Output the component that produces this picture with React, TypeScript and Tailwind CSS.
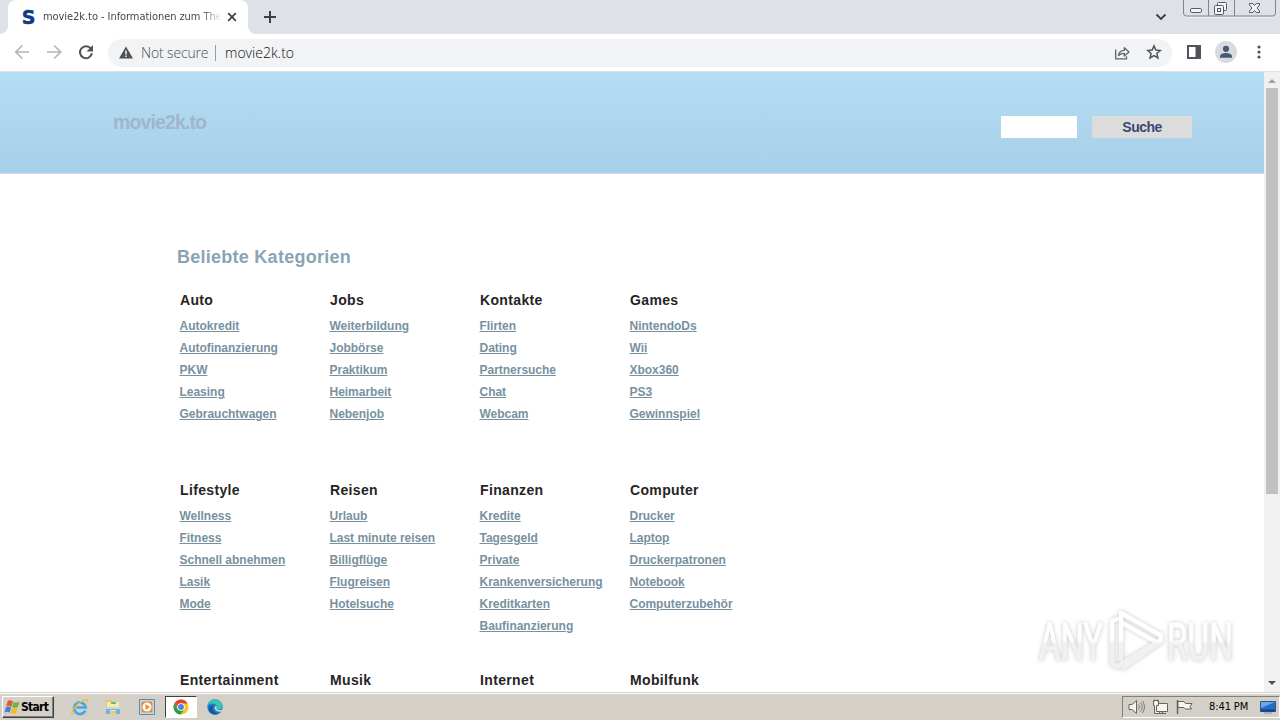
import React from "react";

type Category = { title: string; links: string[] };

const rows: Category[][] = [
  [
    { title: "Auto", links: ["Autokredit", "Autofinanzierung", "PKW", "Leasing", "Gebrauchtwagen"] },
    { title: "Jobs", links: ["Weiterbildung", "Jobbörse", "Praktikum", "Heimarbeit", "Nebenjob"] },
    { title: "Kontakte", links: ["Flirten", "Dating", "Partnersuche", "Chat", "Webcam"] },
    { title: "Games", links: ["NintendoDs", "Wii", "Xbox360", "PS3", "Gewinnspiel"] },
  ],
  [
    { title: "Lifestyle", links: ["Wellness", "Fitness", "Schnell abnehmen", "Lasik", "Mode"] },
    { title: "Reisen", links: ["Urlaub", "Last minute reisen", "Billigflüge", "Flugreisen", "Hotelsuche"] },
    { title: "Finanzen", links: ["Kredite", "Tagesgeld", "Private", "Krankenversicherung", "Kreditkarten", "Baufinanzierung"] },
    { title: "Computer", links: ["Drucker", "Laptop", "Druckerpatronen", "Notebook", "Computerzubehör"] },
  ],
  [
    { title: "Entertainment", links: [] },
    { title: "Musik", links: [] },
    { title: "Internet", links: [] },
    { title: "Mobilfunk", links: [] },
  ],
];

function TabStrip() {
  return (
    <div className="flex h-[34px] shrink-0 items-start bg-[#dee1e6]">
      <div className="flex h-[34px] w-2 shrink-0 items-end bg-white">
        <div className="h-full w-full rounded-br-lg bg-[#dee1e6]" />
      </div>
      <div className="flex h-[34px] w-[240px] shrink-0 items-center rounded-t-lg bg-white pl-[13px]">
        <span className="w-[15px] shrink-0 text-center font-['DejaVu_Sans',sans-serif] text-[19px] leading-[19px] font-bold text-[#123a86] [-webkit-text-stroke:0.5px_#123a86]">S</span>
        <div className="ml-[7px] w-[177px] whitespace-nowrap bg-linear-to-r from-[#3c4043] from-88% to-[#e8e8e8] bg-clip-text text-[11px] leading-4 tracking-[-0.06px] text-transparent">
          movie2k.to - Informationen zum The
        </div>
        <svg width="10" height="10" viewBox="0 0 10 10" className="ml-[7px] shrink-0">
          <path d="M1.2 1.2l7.600 7.600M8.800 1.200L1.200 8.800" stroke="#3c4043" strokeWidth="1.700" />
        </svg>
      </div>
      <div className="h-[34px] w-2 shrink-0 bg-white">
        <div className="h-full w-full rounded-bl-lg bg-[#dee1e6]" />
      </div>
      <svg width="14" height="14" viewBox="0 0 14 14" className="ml-[7px] mt-[10px]">
        <path d="M7 1v12M1 7h12" stroke="#3c4043" strokeWidth="2" />
      </svg>
      <svg width="12" height="8" viewBox="0 0 12 8" className="ml-auto mr-[16px] mt-[13px]">
        <path d="M1.500 1.500L6 6l4.500-4.500" fill="none" stroke="#3c4043" strokeWidth="1.900" />
      </svg>
      <svg width="94" height="18" viewBox="0 0 94 18" className="mr-[3px]">
        <path d="M.5 0v13a3 3 0 0 0 3 3h86a3 3 0 0 0 3-3V0M25.500 0v16M51.500 0v16" fill="none" stroke="#80858d" />
        <path d="M3 17.500h87" stroke="#eff1f4" />
        <g fill="#f3f4f6" stroke="#555b64">
          <rect x="7.500" y="8.500" width="11" height="4" rx="1.300" />
          <rect x="34.500" y="2.500" width="9" height="8" rx="1" />
          <rect x="31.500" y="5.500" width="9" height="9" rx="1" />
          <rect x="34.500" y="8.500" width="3" height="3" />
          <path d="M66.500 3.500h3.300l1.700 2 1.700-2h3.300v1.600L74 8l2.500 2.900v1.600h-3.300l-1.700-2-1.700 2h-3.300v-1.600L69 8l-2.500-2.900z" />
        </g>
      </svg>
    </div>
  );
}

function Toolbar() {
  return (
    <div className="flex h-[38px] shrink-0 items-center border-b border-[#e0e0e0] bg-white pl-[14px]">
      <svg width="80" height="18" viewBox="0 0 80 18" className="-mt-px shrink-0">
        <g fill="none" stroke="#b2b4b7" strokeWidth="1.700">
          <path d="M15 9H2M8.300 2.500L1.800 9l6.500 6.500" />
          <path d="M33 9h13.500M40.200 2.500L46.700 9l-6.500 6.500" />
        </g>
        <path d="M76.900 5.700A6 6 0 1 0 77.900 10.300" fill="none" stroke="#505357" strokeWidth="2" />
        <path d="M79 2v6.500h-6.500z" fill="#505357" />
      </svg>
      <div className="ml-[14px] flex h-7 w-[1064px] items-center rounded-full bg-[#f1f3f4] pl-[11px]">
        <svg width="14" height="13" viewBox="0 0 14 13" className="-mt-px shrink-0">
          <path d="M7 .5L14 12.500H0z" fill="#4e5256" />
          <path d="M7 4.500v4M7 9.600v1.500" stroke="#f1f3f4" strokeWidth="1.500" />
        </svg>
        <span className="ml-[8px] w-[68px] whitespace-nowrap font-['Open_Sans','Noto_Sans',sans-serif] text-[14px] leading-5 font-light tracking-[-0.15px] text-[#4c5055]">Not secure</span>
        <span className="ml-[6px] h-4 w-px bg-[#9a9ea3]" />
        <span className="ml-[9px] whitespace-nowrap font-['Open_Sans','Noto_Sans',sans-serif] text-[14px] leading-5 font-light tracking-[0.02px] text-[#101114]">movie2k.to</span>
        <svg width="16" height="16" viewBox="0 0 16 16" className="ml-auto mr-[16px]" fill="none" stroke="#5f6368" strokeWidth="1.300">
          <path d="M1.700 4.500v9.300h10.800v-2.500" />
          <path d="M4.500 10.500c.4-3.300 2.300-5 5.800-5.100V2.700L15 6.900l-4.700 4.100V8.300c-2.500 0-4.300.5-5.800 2.200z" strokeLinejoin="round" />
        </svg>
        <svg width="16" height="16" viewBox="0 0 16 16" className="-mt-px mr-[10px]" fill="none" stroke="#505357" strokeWidth="1.500">
          <path d="M8 1.900l1.800 4.200 4.500.4-3.400 3 1 4.400L8 11.600l-3.900 2.300 1-4.400-3.400-3 4.500-.4z" />
        </svg>
      </div>
      <svg width="14" height="14" viewBox="0 0 14 14" className="-mt-px ml-[15px]">
        <path d="M1 1h12v12H1z" fill="white" stroke="#505357" strokeWidth="2" />
        <path d="M8.500 1H13v12H8.500z" fill="#505357" />
      </svg>
      <svg width="22" height="22" viewBox="0 0 22 22" className="-mt-px ml-[14px]">
        <circle cx="11" cy="11" r="11" fill="#d8dce1" />
        <circle cx="11" cy="7.800" r="3.100" fill="#4a5873" />
        <path d="M5 16.700v-1.400c0-2.200 3.500-3.200 6-3.200s6 1 6 3.200v1.400z" fill="#4a5873" />
      </svg>
      <svg width="4" height="14" viewBox="0 0 4 14" className="-mt-px ml-[20px]" fill="#505357">
        <circle cx="2" cy="2" r="1.600" />
        <circle cx="2" cy="7" r="1.600" />
        <circle cx="2" cy="12" r="1.600" />
      </svg>
    </div>
  );
}

function Watermark() {
  return (
    <svg width="224" height="76" viewBox="0 0 224 76" className="absolute left-[1028px] top-[530px] [filter:drop-shadow(0_0_2px_#c8c8c8)]">
      <defs>
        <linearGradient id="fade" gradientUnits="userSpaceOnUse" x1="0" y1="38" x2="0" y2="42">
          <stop offset="0" stopColor="#ffffff" />
          <stop offset="1" stopColor="#f1f1f1" />
        </linearGradient>
      </defs>
      <g fill="url(#fade)" stroke="url(#fade)" strokeWidth="1.200" fontFamily="'Roboto',sans-serif" fontSize="52">
        <text x="11" y="58" textLength="64" lengthAdjust="spacingAndGlyphs">ANY</text>
        <text x="139" y="58" textLength="66" lengthAdjust="spacingAndGlyphs">RUN</text>
      </g>
      <g fill="none" stroke="url(#fade)" strokeWidth="4.500" strokeLinejoin="round" strokeLinecap="round">
        <path d="M93 57V11l40 22.500v6L95 66" />
        <path d="M89 17l-5 2v43l5 2.500 43-26" />
        <path d="M94 21l36 20" />
      </g>
    </svg>
  );
}

function Page() {
  return (
    <div className="relative flex h-[620px] shrink-0 overflow-hidden bg-white">
      <div className="flex min-w-0 flex-1 flex-col font-['Liberation_Sans',Arial,sans-serif]">
        <header className="flex h-[102px] shrink-0 items-start border-b border-[#c9dbe6] bg-linear-to-b from-[#b4def4] to-[#a8cfe8] pl-[113px] pr-[72px]">
          <h1 className="mt-[38px] text-[19.500px] leading-6 font-bold tracking-[-0.88px] text-[#9fb6cd]">movie2k.to</h1>
          <div className="ml-auto mt-[44px] flex gap-[15px]">
            <input aria-label="Suche" className="h-[22px] w-[76px] bg-white" />
            <button className="h-[22px] w-[100px] bg-[#dcdcdc] text-[14px] leading-[22px] font-bold tracking-[-0.55px] text-[#3c4774]">Suche</button>
          </div>
        </header>
        <main className="pl-[177px]">
          <h2 className="mt-[71px] text-[18px] leading-6 font-bold tracking-[0.26px] text-[#8aa4b5]">Beliebte Kategorien</h2>
          <div className="ml-[3px] mt-[19px]">
            {rows.map((row, i) => (
              <div key={i} className="grid h-[190px] grid-cols-[repeat(4,150px)] items-start">
                {row.map((c) => (
                  <section key={c.title}>
                    <h3 className="text-[14px] leading-6 font-bold tracking-[0.35px] text-[#252525]">{c.title}</h3>
                    <ul className="-ml-[0.5px] mt-[3px]">
                      {c.links.map((l) => (
                        <li key={l} className="h-[22px] whitespace-nowrap text-[12px] leading-[22px] font-bold tracking-[-0.02px] text-[#7891a0]">
                          <a href="#" className="underline decoration-1 underline-offset-1">{l}</a>
                        </li>
                      ))}
                    </ul>
                  </section>
                ))}
              </div>
            ))}
          </div>
        </main>
      </div>
      <div className="flex w-4 shrink-0 flex-col items-center bg-[#f1f1f1]">
        <svg width="16" height="16" viewBox="0 0 16 16" className="shrink-0">
          <path d="M4 11l4-4 4 4z" fill="#a3a3a3" />
        </svg>
        <div className="h-[406px] w-3 bg-[#c1c1c1]" />
        <svg width="16" height="16" viewBox="0 0 16 16" className="mt-auto shrink-0">
          <path d="M4 5l4 4 4-4z" fill="#505050" />
        </svg>
      </div>
      <Watermark />
    </div>
  );
}

function Taskbar() {
  return (
    <div className="flex h-7 shrink-0 items-center border-t border-[#d4d0c8] bg-[#d4d0c8] font-['DejaVu_Sans_Condensed','DejaVu_Sans',sans-serif] shadow-[inset_0_1px_0_#ffffff]">
      <button className="ml-[2px] mt-px flex h-[22px] w-[52px] shrink-0 items-center border border-t-white border-r-[#404040] border-b-[#404040] border-l-white shadow-[inset_-1px_-1px_0_#808080]">
        <svg width="17" height="16" viewBox="0 0 16 16" className="ml-px shrink-0">
          <path d="M3.200 1.900Q5.700.3 8.300 2.300L6.900 7.700Q4.500 5.900 1.800 7.200z" fill="#e4572e" />
          <path d="M8.900 2.700Q11.500 4.500 15 2.500L13.400 8Q10.300 9.600 7.600 8z" fill="#70b33d" />
          <path d="M1.600 8Q4.200 6.700 6.600 8.300L5.100 13.700Q2.900 12 0 13.400z" fill="#3f82cf" />
          <path d="M7.400 8.700Q10 10.300 13.200 8.700l-1.500 5.200Q8.800 15.700 6 14z" fill="#f2ba2a" />
        </svg>
        <span className="text-[12px] leading-4 font-bold tracking-[-0.7px] text-black">Start</span>
      </button>
      <svg width="18" height="18" viewBox="0 0 18 18" className="ml-[17px] mt-px shrink-0">
        <path d="M14.300 12.500A5.800 5.800 0 1 1 14.700 9.500H5.500" fill="none" stroke="#46a8e1" strokeWidth="2.700" />
        <path d="M2.500 15.500C-1 17 1.500 10.500 7 6S18-.2 16.500 4.500" fill="none" stroke="#e8bd42" strokeWidth="1.500" />
      </svg>
      <svg width="18" height="18" viewBox="0 0 18 18" className="ml-[15px] mt-px shrink-0">
        <path d="M2 2h5l1 1.500h7V15H2z" fill="#e8c769" />
        <path d="M3 4h12v9H3z" fill="#f9e9a9" />
        <path d="M7 4h5v2H7z" fill="#70b96a" />
        <path d="M2 9h14v7h-4v-4H6v4H2z" fill="#75b5dc" />
        <path d="M2 9h14v2H2z" fill="#b7dcf0" />
      </svg>
      <svg width="16" height="16" viewBox="0 0 16 16" className="ml-[17px] mt-px shrink-0">
        <path d="M.5.500h15v15H.5z" fill="#b8d9ef" stroke="#568db7" />
        <rect x="2.500" y="2.500" width="11" height="11" rx="2" fill="#ef8b24" />
        <circle cx="8" cy="8" r="4.500" fill="white" />
        <path d="M6.500 5l4.500 3-4.500 3z" fill="#ef8b24" />
      </svg>
      <div className="ml-[10px] mt-px flex h-[22px] w-[32px] shrink-0 items-center justify-center border border-t-[#404040] border-r-white border-b-white border-l-[#404040] bg-white">
        <svg width="16" height="16" viewBox="0 0 16 16">
          <circle cx="8" cy="8" r="7.500" fill="#f5c527" />
          <path d="M1.400 4.400A7.500 7.500 0 0 1 14.600 4.500H8L4.900 9.700z" fill="#df4535" />
          <path d="M1.400 4.400L4.700 10 8 11.500l2.700-.2-3.100 4.200A7.500 7.500 0 0 1 1.400 4.400z" fill="#2b9f50" />
          <circle cx="8" cy="8" r="3.800" fill="white" />
          <circle cx="8" cy="8" r="2.900" fill="#4285e8" />
        </svg>
      </div>
      <svg width="16" height="16" viewBox="0 0 16 16" className="ml-[10px] mt-px shrink-0">
        <circle cx="8" cy="8" r="7.700" fill="#167bc9" />
        <path d="M.4 7C2 3 5-.5 9 .4c4 .8 7 4 6.700 7.300-.3 3-4.700 3.300-6 1.800.8-3-1.700-5-4.700-5C3 4.500 1.500 5.500.4 7z" fill="#39c5b1" />
        <path d="M6 7c-1.500 3.500 1 7 5.500 7.800C7 17 2 14 2 10c0-2.500 2-4 4-3z" fill="#1255a2" />
        <path d="M8 7.200c1.500-.5 2 1 1.500 2.200 1.500 2 4 2.200 6 .8-.4 1.500-1 2.300-2 2.600C9 13 6.500 10 8 7.200z" fill="#d4d0c8" />
      </svg>
      <div className="ml-auto mt-px flex h-[22px] w-[158px] shrink-0 items-center border border-t-[#808080] border-r-white border-b-white border-l-[#808080] pl-[5px]">
        <svg width="66" height="16" viewBox="0 0 66 16" className="shrink-0" fill="#f5f5f2" stroke="#65645f">
          <path d="M1 5.500h3l4.500-4v13l-4.500-4H1z" />
          <path d="M10.500 5.500q2 2.500 0 5M12.500 3.500q3.500 4.500 0 9M14.500 2q4 6 0 12" fill="none" strokeWidth=".8" />
          <path d="M28.500 4.500h11v8h-11zM31 14.500h7M34.500 12.500v2" />
          <path d="M25.500 1.500h5v5h-2v6h3v2h-5v-8h-1zM26.500.5v2M29.500.5v2" />
          <path d="M49.500 1v14" strokeWidth="1.500" />
          <path d="M50 2.500h6l1.500 2H64l-2 3 1.500 2.500h-6L56 8.500h-6z" />
        </svg>
        <span className="ml-[15px] w-[42px] whitespace-nowrap text-[11px] leading-4 tracking-[-0.1px] text-black">8:41 PM</span>
        <svg width="16" height="16" viewBox="0 0 16 16" className="ml-[9px] shrink-0">
          <path d="M.5 2.500h15v10H.5z" fill="#246cc5" stroke="#34557b" />
          <path d="M1 3h14L1 9z" fill="#66a9ed" />
          <path d="M1 10.500h14v2H1z" fill="#173f83" />
          <path d="M4 14h8" stroke="#7790ad" />
        </svg>
      </div>
    </div>
  );
}

export default function App() {
  return (
    <div className="flex h-[720px] w-[1280px] flex-col overflow-hidden bg-white font-['DejaVu_Sans_Condensed','DejaVu_Sans',sans-serif]">
      <TabStrip />
      <Toolbar />
      <Page />
      <Taskbar />
    </div>
  );
}
